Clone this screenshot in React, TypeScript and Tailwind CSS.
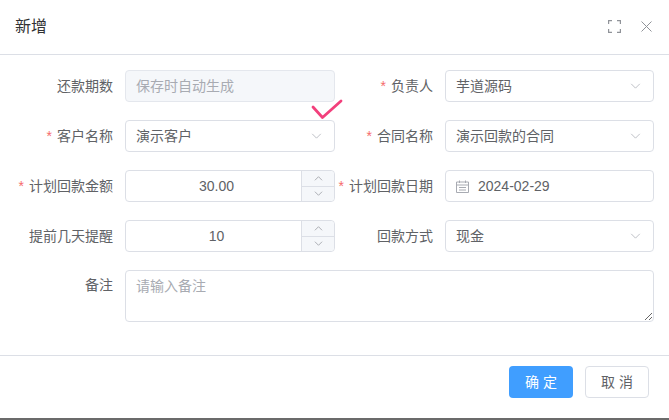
const Chevron = ({ className = "", color = "#b4b7bd" }: { className?: string; color?: string }) => (
  <svg viewBox="0 0 12 7" className={className} fill="none" stroke={color} strokeWidth="1">
    <path d="M1 1l5 5 5-5" />
  </svg>
);

const Label = ({ text, required = false, top = false }: { text: string; required?: boolean; top?: boolean }) => (
  <div className={`flex justify-end pr-3 text-sm text-[#606266] whitespace-nowrap ${top ? "items-start pt-[5px]" : "items-center"}`}>
    {required && <span className="mr-[5px] text-[#f56c6c]">*</span>}
    <span>{text}</span>
  </div>
);

const Select = ({ value }: { value: string }) => (
  <div className="flex h-8 items-center justify-between rounded border border-[#dcdfe6] bg-white pl-[10px] pr-3 text-sm text-[#606266]">
    <span>{value}</span>
    <Chevron className="h-[6px] w-[11px]" />
  </div>
);

const NumberInput = ({ value }: { value: string }) => (
  <div className="flex h-8 rounded border border-[#dcdfe6] bg-white text-sm text-[#606266]">
    <div className="flex flex-1 items-center justify-center pl-[6px]">{value}</div>
    <div className="flex w-[33px] flex-col overflow-hidden rounded-r border-l border-[#dcdfe6] bg-[#f5f7fa]">
      <div className="flex flex-1 items-center justify-center border-b border-[#dcdfe6]">
        <Chevron className="h-[5px] w-[9px] rotate-180" color="#909399" />
      </div>
      <div className="flex flex-1 items-center justify-center">
        <Chevron className="h-[5px] w-[9px]" color="#909399" />
      </div>
    </div>
  </div>
);

export default function App() {
  return (
    <div className="relative flex h-[420px] w-[669px] flex-col overflow-hidden bg-white font-['Liberation_Sans','Noto_Sans_CJK_SC',sans-serif]">
      <header className="flex h-[55px] shrink-0 items-center justify-between border-b border-[#dcdfe6] pb-[1px] pl-[15px] pr-[17px]">
        <h1 className="text-base text-[#303133]">新增</h1>
        <div className="flex items-center gap-5">
          <svg viewBox="0 0 13 13" className="h-[13px] w-[13px]" fill="none" stroke="#909399" strokeWidth="1.2">
            <path d="M.6 4V.6H4M9 .6h3.4V4M12.4 9v3.4H9M4 12.4H.6V9" />
          </svg>
          <svg viewBox="0 0 11 11" className="h-[11px] w-[11px]" fill="none" stroke="#909399" strokeWidth="1">
            <path d="M.5.5l10 10M10.5.5l-10 10" />
          </svg>
        </div>
      </header>

      <main className="grid flex-1 grid-cols-[125px_210px_110px_209px] content-start gap-y-[18px] pt-[15px]">
        <Label text="还款期数" />
        <div className="flex h-8 items-center rounded border border-[#e4e7ed] bg-[#f5f7fa] px-[10px] text-sm text-[#a8abb2]">
          保存时自动生成
        </div>
        <Label text="负责人" required />
        <Select value="芋道源码" />

        <Label text="客户名称" required />
        <Select value="演示客户" />
        <Label text="合同名称" required />
        <Select value="演示回款的合同" />

        <Label text="计划回款金额" required />
        <NumberInput value="30.00" />
        <Label text="计划回款日期" required />
        <div className="flex h-8 items-center gap-[9px] rounded border border-[#dcdfe6] bg-white pl-[10px] text-sm text-[#606266]">
          <svg viewBox="0 0 13 13" className="h-[13px] w-[13px]" fill="none" stroke="#a8abb2" strokeWidth="1">
            <path d="M.5 2h12v10.5H.5zM.5 5h12M3.5.5V3M9.5.5V3M3 7.5h7M3 10h7" />
          </svg>
          <span>2024-02-29</span>
        </div>

        <Label text="提前几天提醒" />
        <NumberInput value="10" />
        <Label text="回款方式" />
        <Select value="现金" />

        <Label text="备注" top />
        <textarea
          placeholder="请输入备注"
          className="col-span-3 h-[52px] rounded border border-[#dcdfe6] bg-white px-[10px] py-[5px] text-sm text-[#606266] outline-none placeholder:text-[#a8abb2]"
        />
      </main>

      <footer className="flex h-[63px] shrink-0 justify-end gap-3 border-t border-[#dcdfe6] pr-5 pt-[10px]">
        <button className="h-8 w-16 rounded bg-[#409eff] text-sm text-white">确 定</button>
        <button className="h-8 w-16 rounded border border-[#dcdfe6] bg-white text-sm text-[#606266]">取 消</button>
      </footer>
      <div className="h-[2px] shrink-0 bg-[#6b6b6b]" />

      <svg viewBox="0 0 32 22" className="absolute left-[311px] top-[99px] h-[22px] w-[32px]" fill="none" stroke="#f2407c" strokeWidth="2.8" strokeLinecap="round" strokeLinejoin="round">
        <path d="M2 8l9.5 10.5L30 2" />
      </svg>
    </div>
  );
}
